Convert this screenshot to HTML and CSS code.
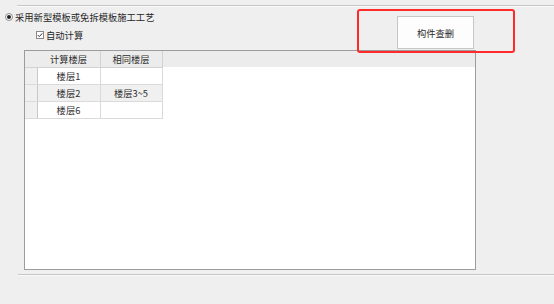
FILE: index.html
```html
<!DOCTYPE html>
<html>
<head>
<meta charset="utf-8">
<link rel="stylesheet" href="styles.css">
</head>
<body>
<div class="topline"></div>
<div class="top">
  <div class="opts">
    <div class="opt"><span class="radio"><span class="dot"></span></span>采用新型模板或免拆模板施工工艺</div>
    <div class="chkrow"><svg class="chk" width="8" height="8" viewBox="0 0 8 8"><rect x="0.5" y="0.5" width="7" height="7" fill="#fff" stroke="#8a8a8a"/><path d="M1.8 4.1 L3.3 5.6 L6.3 2.3" fill="none" stroke="#333" stroke-width="1"/></svg>自动计算</div>
  </div>
  <button class="btn">构件查删</button>
</div>
<div class="panel">
  <table class="grid">
    <thead>
      <tr><th class="rh"></th><th class="c1">计算楼层</th><th class="c2">相同楼层</th></tr>
    </thead>
    <tbody>
      <tr><td class="rh"></td><td>楼层1</td><td></td></tr>
      <tr class="alt"><td class="rh"></td><td>楼层2</td><td>楼层3~5</td></tr>
      <tr><td class="rh"></td><td>楼层6</td><td></td></tr>
    </tbody>
  </table>
</div>
<div class="bottomline"></div>
<div class="mark"></div>
</body>
</html>
```
FILE: styles.css
```css
* { box-sizing: border-box; }
html, body { margin: 0; padding: 0; }
body {
  width: 554px;
  height: 304px;
  background: #efefef;
  font-family: "Noto Sans CJK SC", "Microsoft YaHei", sans-serif;
  font-size: 9.3px;
  color: #262626;
  position: relative;
  overflow: hidden;
}
.topline {
  margin: 5px 0 0 17px;
  height: 2px;
  border-top: 1px solid #c6c6c6;
  border-bottom: 1px solid #fafafa;
}
.top {
  display: flex;
  height: 43px;
  padding-top: 3px;
}
.opts { display: flex; flex-direction: column; }
.opt {
  display: flex;
  align-items: center;
  height: 14px;
  line-height: 14px;
  padding-left: 5px;
}
.radio {
  width: 8px;
  height: 8px;
  border: 1px solid #8c8c8c;
  border-radius: 50%;
  background: #fff;
  margin-right: 2px;
  display: flex;
  align-items: center;
  justify-content: center;
}
.dot { width: 4px; height: 4px; border-radius: 50%; background: #222; }
.chkrow {
  display: flex;
  align-items: center;
  height: 14px;
  line-height: 14px;
  margin-top: 4px;
  padding-left: 36px;
}
.chk { margin-right: 2px; }
.btn {
  margin: 6px 80px 0 auto;
  width: 77px;
  height: 33px;
  background: #fdfdfd;
  border: 1px solid #c6c6c6;
  font-family: inherit;
  font-size: 9.3px;
  color: #2a2a2a;
  padding: 0;
}
.panel {
  margin-left: 24px;
  width: 452px;
  height: 220px;
  border: 1px solid #9c9c9c;
  background: #fff;
  background-image: linear-gradient(#ececec, #ececec);
  background-size: 100% 16px;
  background-repeat: no-repeat;
}
.grid {
  border-collapse: collapse;
  table-layout: fixed;
  font-size: 9.3px;
  color: #2e2e2e;
}
.grid th, .grid td {
  padding: 0;
  height: 17px;
  line-height: 16px;
  text-align: center;
  font-weight: normal;
  border-right: 1px solid #dadada;
  border-bottom: 1px solid #dadada;
}
.grid .c1 { width: 63px; }
.grid .c2 { width: 62px; }
.grid th { height: 16px; border-right-color: #d2d2d2; border-bottom-color: #d2d2d2; }
.grid .rh { width: 12px; background: #f0f0f0; border-right: 1px solid #c8c8c8; }
.grid th.rh { background: #ececec; border-right-color: #ececec; }
.grid tr.alt td { background: #f0f0f0; }
.bottomline {
  margin: 4px 0 0 18px;
  height: 2px;
  border-top: 1px solid #c6c6c6;
  border-bottom: 1px solid #fafafa;
}
.mark {
  position: absolute;
  left: 357px;
  top: 9px;
  width: 158px;
  height: 44px;
  border: 2px solid #ff2a2a;
  border-radius: 3px;
}
```
